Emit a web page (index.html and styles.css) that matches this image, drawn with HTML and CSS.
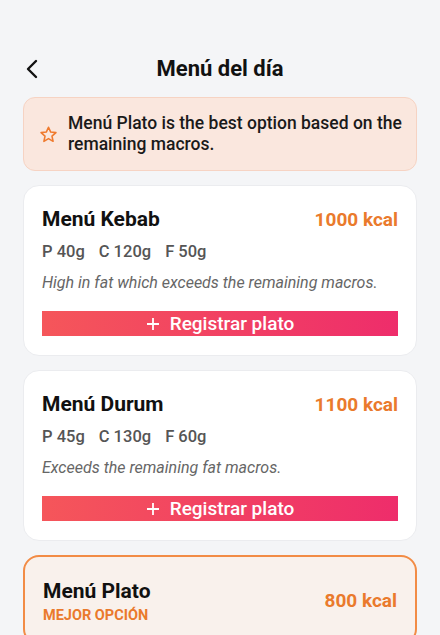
FILE: index.html
```html
<!DOCTYPE html>
<html lang="es">

<head>
	<meta charset="UTF-8">
	<meta name="viewport" content="width=device-width, initial-scale=1.0">
	<title>Menú del día</title>
	<link rel="stylesheet" href="styles.css">
</head>

<body>
	<div class="screen">
		<header class="header">
			<button class="back" aria-label="Volver">
				<svg width="14" height="20" viewBox="0 0 14 20"><path d="M11 2 L3 10 L11 18" fill="none" stroke="#111" stroke-width="2.4" stroke-linecap="round" stroke-linejoin="round"/></svg>
			</button>
			<h1>Menú del día</h1>
		</header>

		<div class="banner">
			<svg class="star" width="19" height="19" viewBox="0 0 24 24"><path d="M12 2.8 L14.8 8.9 L21.4 9.6 L16.4 14 L17.8 20.6 L12 17.2 L6.2 20.6 L7.6 14 L2.6 9.6 L9.2 8.9 Z" fill="none" stroke="#ef7a2e" stroke-width="2" stroke-linejoin="round"/></svg>
			<p>Menú Plato is the best option based on the remaining macros.</p>
		</div>

		<div class="card">
			<div class="card-top">
				<h2>Menú Kebab</h2>
				<span class="kcal">1000 kcal</span>
			</div>
			<div class="macros"><span>P 40g</span><span>C 120g</span><span>F 50g</span></div>
			<p class="note">High in fat which exceeds the remaining macros.</p>
			<button class="register">
				<svg width="14" height="14" viewBox="0 0 14 14"><path d="M7 1 V13 M1 7 H13" stroke="#fff" stroke-width="1.8"/></svg>
				Registrar plato
			</button>
		</div>

		<div class="card">
			<div class="card-top">
				<h2>Menú Durum</h2>
				<span class="kcal">1100 kcal</span>
			</div>
			<div class="macros"><span>P 45g</span><span>C 130g</span><span>F 60g</span></div>
			<p class="note">Exceeds the remaining fat macros.</p>
			<button class="register">
				<svg width="14" height="14" viewBox="0 0 14 14"><path d="M7 1 V13 M1 7 H13" stroke="#fff" stroke-width="1.8"/></svg>
				Registrar plato
			</button>
		</div>

		<div class="card best">
			<div class="card-top">
				<div>
					<h2>Menú Plato</h2>
					<span class="tag">MEJOR OPCIÓN</span>
				</div>
				<span class="kcal">800 kcal</span>
			</div>
		</div>
	</div>
</body>

</html>
```

FILE: styles.css
```css
body {
	font-family: Roboto, "Noto Sans", sans-serif;
	background-color: #f4f5f7;
	margin: 0;
	padding: 0;
	color: #111;
}

.screen {
	padding: 48px 23px 0;
	display: flex;
	flex-direction: column;
}

.header {
	height: 42px;
	display: flex;
	align-items: center;
	justify-content: center;
	position: relative;
}

.back {
	position: absolute;
	left: 2px;
	top: 11px;
	background: none;
	border: none;
	padding: 0;
	display: flex;
}

.header h1 {
	margin: 0;
	font-size: 22px;
	font-weight: 700;
	line-height: 28px;
}

.banner {
	margin-top: 7px;
	background-color: #fae7de;
	border: 1px solid #f6d3c3;
	border-radius: 12px;
	padding: 15px 10px 15px 15px;
	display: flex;
	align-items: center;
	gap: 10px;
}

.star {
	flex-shrink: 0;
}

.banner p {
	margin: 0;
	font-size: 17.5px;
	font-weight: 500;
	line-height: 21px;
	color: #1a1a1a;
}

.card {
	margin-top: 14px;
	background: #fff;
	border: 1px solid #ebecef;
	border-radius: 16px;
	padding: 20px 18px 19px;
	display: flex;
	flex-direction: column;
}

.card-top {
	display: flex;
	justify-content: space-between;
	align-items: center;
}

.card h2 {
	margin: 0;
	font-size: 21px;
	font-weight: 700;
	line-height: 26px;
}

.kcal {
	font-size: 19px;
	font-weight: 700;
	color: #ea7a2c;
}

.macros {
	margin-top: 10px;
	display: flex;
	gap: 14px;
	font-size: 16.5px;
	font-weight: 500;
	line-height: 20px;
	color: #555;
}

.note {
	margin: 11px 0 0;
	font-size: 16px;
	font-style: italic;
	line-height: 20px;
	color: #666;
}

.register {
	margin-top: 18px;
	height: 25px;
	border: none;
	background: linear-gradient(90deg, #f5565a, #ee2d6b);
	color: #fff;
	font-family: inherit;
	font-size: 19px;
	font-weight: 500;
	display: flex;
	align-items: center;
	justify-content: center;
	gap: 10px;
	padding: 0;
}

.best {
	margin-top: 14px;
	background: #f9f1ec;
	border: 2px solid #f28c46;
	padding-top: 21px;
}

.best .kcal {
	margin-top: -2px;
}

.tag {
	display: block;
	margin-top: 3px;
	font-size: 14.5px;
	font-weight: 700;
	color: #ea7a2c;
}
```
